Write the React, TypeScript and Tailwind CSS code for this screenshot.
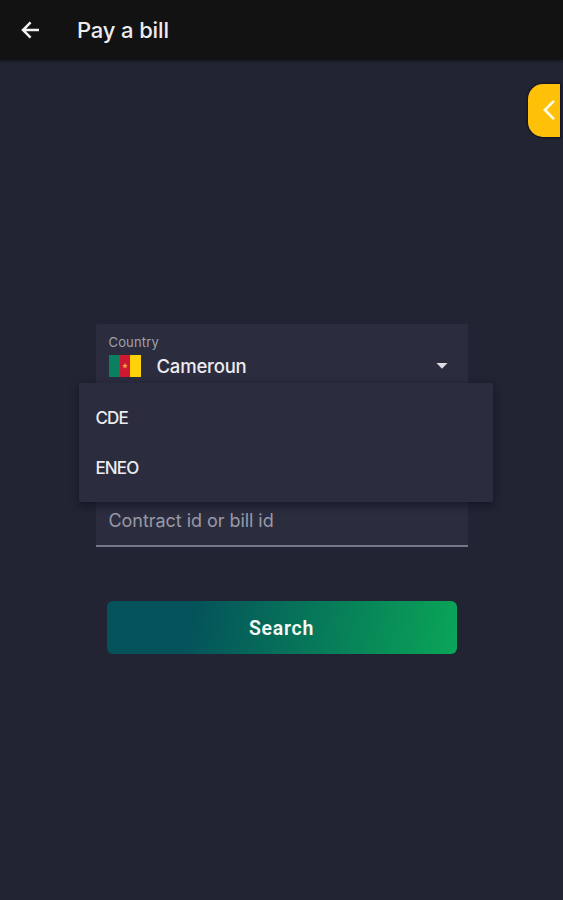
import type { ReactNode } from "react"

const billers = ["CDE", "ENEO"]

function BackIcon() {
  return (
    <svg viewBox="0 0 20 20" className="h-5 w-5" fill="none" stroke="#f1f1f1" strokeWidth="2.5">
      <path d="M19 10H3.5M10.6 2.4 3 10l7.6 7.6" />
    </svg>
  )
}

function CameroonFlag() {
  return (
    <svg viewBox="0 0 32 22" className="h-[22px] w-8 shrink-0">
      <path fill="#0a8060" d="M0 0h11v22H0z" />
      <path fill="#ce1730" d="M11 0h10v22H11z" />
      <path fill="#fdd20b" d="M21 0h11v22H21z" />
      <path fill="#f5a33c" d="m16 7.6.8 2.4h2.1l-1.7 1.4.7 2.2-1.9-1.3-1.9 1.3.7-2.2-1.7-1.4h2.1z" />
    </svg>
  )
}

function Field({ className, children }: { className: string; children: ReactNode }) {
  return (
    <div className={`rounded-t-xs border-b-2 border-[#777887] bg-[#2b2d3e] px-[13px] ${className}`}>
      {children}
    </div>
  )
}

export default function App() {
  return (
    <div className="flex h-[900px] w-full flex-col overflow-hidden bg-[#222433] font-['Inter',sans-serif] text-[#ececf0]">
      <header className="z-10 flex h-[60px] shrink-0 items-center bg-[#121212] pl-5 shadow-[0_1px_3px_rgba(0,0,0,0.5)]">
        <button aria-label="Back">
          <BackIcon />
        </button>
        <h1 className="ml-[37px] text-[22px] leading-none font-medium tracking-[-0.15px]">Pay a bill</h1>
      </header>

      <main className="flex flex-1 flex-col">
        <div className="flex h-[264px] justify-end pt-[23.5px] pr-[3px]">
          <button
            aria-label="Open panel"
            className="flex h-[53px] w-8 items-center justify-end rounded-l-[15px] bg-[#ffc107] pr-[5px] shadow-[0_0_2px_1px_rgba(8,12,30,0.7)]"
          >
            <svg viewBox="0 0 12 20" className="h-5 w-3" fill="none" stroke="#fffdf0" strokeWidth="2.6">
              <path d="M11 .9 1.9 10l9.1 9.1" />
            </svg>
          </button>
        </div>

        <form className="relative mx-auto flex w-[372px] flex-col">
          <Field className="h-[70px] pt-[11px]">
            <label className="block text-[13px] leading-[15px] tracking-[0.15px] text-[#a0a1ae]">Country</label>
            <div className="mt-[5px] flex items-center">
              <CameroonFlag />
              <span className="ml-4 text-[18.5px] leading-[22px] font-medium tracking-[-0.2px]">Cameroun</span>
              <svg viewBox="0 0 12 6" className="mr-[7px] ml-auto h-[6px] w-3">
                <path fill="#dcdde5" d="M.5 0h11L6 5.8z" />
              </svg>
            </div>
          </Field>

          <ul className="absolute top-[59px] -left-[17px] z-10 flex h-[119px] w-[414px] flex-col rounded-xs bg-[#2b2d3e] pt-[10px] shadow-[0_3px_9px_rgba(10,12,28,0.65)]">
            {billers.map((biller) => (
              <li key={biller} className="flex h-[50.5px] items-center pl-[17px] text-[17px] font-medium tracking-[-0.9px]">
                {biller}
              </li>
            ))}
          </ul>

          <Field className="mt-[91px] flex h-[62px] items-center pt-3">
            <span className="text-[18px] leading-none tracking-[-0.05px] text-[#9899a7]">Contract id or bill id</span>
          </Field>

          <button
            type="button"
            className="mx-auto mt-[54px] h-[53px] w-[350px] rounded-md bg-linear-[100deg] from-[#04525a] from-24% to-[#0aa558] pt-[2px] font-['Roboto',sans-serif] text-[19.5px] font-semibold tracking-[0.7px] text-[#f4faf8]"
          >
            Search
          </button>
        </form>
      </main>
    </div>
  )
}
